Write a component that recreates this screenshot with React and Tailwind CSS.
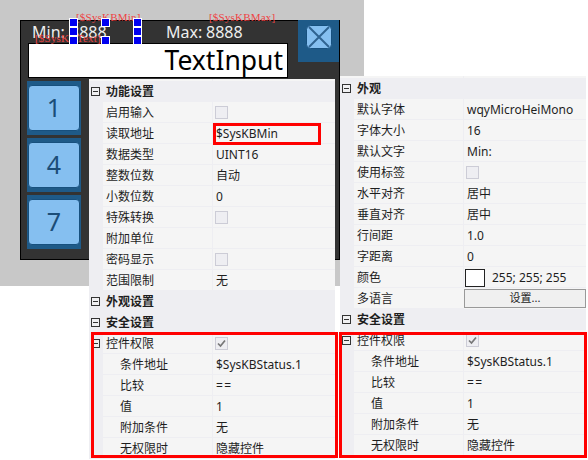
import React from "react";

const uiFont = "font-['Noto_Sans','Noto_Sans_CJK_SC',sans-serif]";

const Toggle = () => (
	<span className="flex h-[9px] w-[9px] shrink-0 items-center justify-center border border-[#333] bg-[#f0f0f2]">
		<span className="h-px w-[5px] bg-[#333]" />
	</span>
);

const CheckBox = ({ checked }) => (
	<span className="ml-[-1px] flex h-[13px] w-[13px] items-center justify-center border border-[#ccccd6] bg-[#eeeef2]">
		{checked && (
			<svg width="9" height="9" viewBox="0 0 9 9" fill="none">
				<path d="M1 4.5 L3.5 7 L8 1.5" stroke="#777" strokeWidth="1.7" />
			</svg>
		)}
	</span>
);

const Header = ({ title }) => (
	<div className="flex h-[21px] items-center bg-[#eeeef2] pl-[2px]">
		<Toggle />
		<span className="ml-[6px] text-[12px] font-bold text-[#1e1e1e]">{title}</span>
	</div>
);

const Row = ({ name, sub, toggle, children }) => (
	<div className="flex h-[21px] items-stretch">
		<div className="flex w-[14px] shrink-0 items-center bg-[#eeeef2] pl-[2px]">{toggle && <Toggle />}</div>
		<div className={`flex w-[110px] shrink-0 items-center border-b border-r border-[#eeeef2] bg-[#f5f5f5] pt-px ${sub ? "pl-[17px]" : "pl-[3px]"}`}>
			<span className="text-[12px] text-[#1e1e1e]">{name}</span>
		</div>
		<div className="flex flex-1 items-center border-b border-[#eeeef2] bg-[#f5f5f5] pl-[3px] pt-px text-[12px] text-[#1e1e1e]">
			{children}
		</div>
	</div>
);

const Security = () => (
	<>
		<Row name="控件权限" toggle>
			<CheckBox checked />
		</Row>
		<Row name="条件地址" sub>$SysKBStatus.1</Row>
		<Row name="比较" sub>
			<span className="tracking-[1.5px]">==</span>
		</Row>
		<Row name="值" sub>1</Row>
		<Row name="附加条件" sub>无</Row>
		<Row name="无权限时" sub>隐藏控件</Row>
	</>
);

const TopStrip = () => (
	<div className="flex h-[2px]">
		<div className="w-[14px] bg-[#f5f5f5]" />
		<div className="w-[110px] border-r border-[#eeeef2] bg-[#f5f5f5]" />
		<div className="flex-1 bg-[#f5f5f5]" />
	</div>
);

const Key = ({ label }) => (
	<div className="flex h-[54px] w-[54px] items-center justify-center bg-[#1e5a88]">
		<div className="flex h-[46px] w-[52px] items-center justify-center rounded-[4px] border border-[#17507e] bg-[#85bff0] text-[25px] text-[#1b4d78]">
			{label}
		</div>
	</div>
);

const Handle = ({ className }) => (
	<div className={`absolute h-[9px] w-[9px] border border-white bg-[#0000f0] ${className}`} />
);

const Tag = ({ className, children }) => (
	<span className={`absolute font-['Liberation_Serif',serif] text-[11px] leading-none tracking-[0.2px] text-[#ee4444] ${className}`}>
		{children}
	</span>
);

const Device = () => (
	<div className="absolute left-[20px] top-[20px] h-[240px] w-[320px] border border-black bg-[#333333]">
		<div className="flex h-[22px] items-center pl-[11px] text-[16px] text-[#eeeeee]">
			<span className="w-[38px]">Min:</span>
			<span className="w-[96px]">8888</span>
			<span className="w-[40px]">Max:</span>
			<span>8888</span>
		</div>
		<div className="ml-[7px] flex h-[35px] w-[260px] items-center justify-end border border-black bg-white pr-[4px] text-[26.5px] leading-none text-black">
			TextInput
		</div>
		<div className="ml-[6px] mt-[3px] flex flex-col gap-[3px]">
			<Key label="1" />
			<Key label="4" />
			<Key label="7" />
		</div>
		<div className="absolute left-[277px] top-[-1px] flex h-[42px] w-[41px] items-start justify-center bg-[#1e5a88] pt-[5px]">
			<svg width="26" height="24" viewBox="0 0 26 24">
				<rect x="0.5" y="0.5" width="25" height="23" rx="4" fill="#85bff0" stroke="#17507e" />
				<path d="M3 2 L23 22 M23 2 L3 22" stroke="#2f6391" strokeWidth="2" />
			</svg>
		</div>
	</div>
);

const Selection = () => (
	<>
		<Tag className="left-[76px] top-[12px]">[$SysKBMin]</Tag>
		<Tag className="left-[209px] top-[12px]">[$SysKBMax]</Tag>
		<Tag className="left-[35px] top-[33px]">[$SysKBText]</Tag>
		<Handle className="left-[69px] top-[18px]" />
		<Handle className="left-[69px] top-[27px]" />
		<Handle className="left-[69px] top-[36px]" />
		<Handle className="left-[101px] top-[18px]" />
		<Handle className="left-[101px] top-[36px]" />
		<Handle className="left-[133px] top-[18px]" />
		<Handle className="left-[133px] top-[27px]" />
		<Handle className="left-[133px] top-[36px]" />
	</>
);

const LeftPanel = () => (
	<div className="absolute left-[89px] top-[79px] w-[246px]">
		<TopStrip />
		<Header title="功能设置" />
		<Row name="启用输入"><CheckBox /></Row>
		<Row name="读取地址">$SysKBMin</Row>
		<Row name="数据类型">UINT16</Row>
		<Row name="整数位数">自动</Row>
		<Row name="小数位数">0</Row>
		<Row name="特殊转换"><CheckBox /></Row>
		<Row name="附加单位" />
		<Row name="密码显示"><CheckBox /></Row>
		<Row name="范围限制">无</Row>
		<Header title="外观设置" />
		<Header title="安全设置" />
		<Security />
	</div>
);

const RightPanel = () => (
	<div className="absolute left-[340px] top-[76px] w-[246px]">
		<TopStrip />
		<Header title="外观" />
		<Row name="默认字体">wqyMicroHeiMono</Row>
		<Row name="字体大小">16</Row>
		<Row name="默认文字">Min:</Row>
		<Row name="使用标签"><CheckBox /></Row>
		<Row name="水平对齐">居中</Row>
		<Row name="垂直对齐">居中</Row>
		<Row name="行间距">1.0</Row>
		<Row name="字距离">0</Row>
		<Row name="颜色">
			<span className="mr-[7px] ml-[-2px] h-[18px] w-[20px] border border-[#222] bg-white" />
			255; 255; 255
		</Row>
		<div className="flex h-[21px] items-stretch">
			<div className="w-[14px] shrink-0 bg-[#eeeef2]" />
			<div className="flex w-[110px] shrink-0 items-center border-b border-[#eeeef2] bg-[#f5f5f5] pl-[3px] pt-px text-[12px] text-[#1e1e1e]">
				多语言
			</div>
			<div className="flex flex-1 items-center bg-[#f5f5f5]">
				<div className="flex h-[19px] w-full items-center justify-center border border-[#999999] bg-[#f0f0f0] text-[11px] text-[#1e1e1e]">
					设置...
				</div>
			</div>
		</div>
		<Header title="安全设置" />
		<Security />
	</div>
);

const Highlight = ({ className }) => (
	<div className={`absolute border-[3px] border-[#ff0000] ${className}`} />
);

export default function App() {
	return (
		<div className={`relative h-[460px] w-[588px] overflow-hidden bg-white ${uiFont}`}>
			<div className="absolute left-0 top-0 h-[286px] w-[340px] bg-[#c8c8c8]" />
			<div className="absolute left-[340px] top-0 h-[76px] w-[24px] bg-[#c8c8c8]" />
			<Device />
			<Selection />
			<LeftPanel />
			<RightPanel />
			<Highlight className="left-[213px] top-[123px] h-[22px] w-[108px]" />
			<Highlight className="left-[91px] top-[332px] h-[126px] w-[247px]" />
			<Highlight className="left-[339px] top-[332px] h-[126px] w-[248px]" />
		</div>
	);
}
